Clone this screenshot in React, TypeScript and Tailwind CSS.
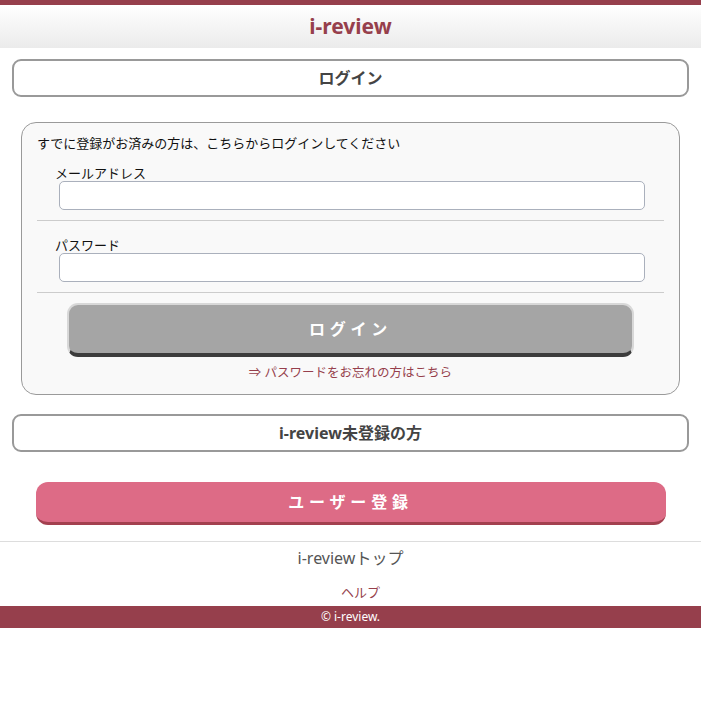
import React from "react";

const font = { fontFamily: '"Noto Sans", "Noto Sans CJK JP", sans-serif' };

function SectionHeader({ children }: { children: React.ReactNode }) {
  return (
    <div className="mx-[12px] h-[38px] rounded-[9px] border-2 border-[#999999] bg-white flex items-center justify-center text-[16px] font-bold text-[#444444]">
      {children}
    </div>
  );
}

export default function App() {
  return (
    <div className="w-[701px] bg-white text-[#222]" style={font}>
      <div className="h-[5px] bg-[#963f4c]" />
      <div className="h-[43px] flex items-center justify-center bg-gradient-to-b from-[#ffffff] to-[#ebebeb]">
        <span className="text-[21px] font-bold text-[#963f4c] leading-none">i-review</span>
      </div>

      <div className="pt-[11px]">
        <SectionHeader>ログイン</SectionHeader>
      </div>

      <div className="mx-[21px] mt-[25px] rounded-[15px] border border-[#9a9a9a] bg-[#f9f9f9] px-[15px] pt-[10px] pb-[11px]">
        <p className="text-[13px] leading-[20px] text-[#111]">すでに登録がお済みの方は、こちらからログインしてください</p>

        <div className="pt-[13px] pb-[10px] border-b border-[#cccccc]">
          <div className="pl-[18px] text-[13px] leading-[15px] text-[#111]">メールアドレス</div>
          <input className="block ml-[22px] mr-[22px] w-[586px] h-[29px] rounded-[5px] border border-[#aab0bc] bg-white" />
        </div>

        <div className="pt-[17px] pb-[10px] border-b border-[#cccccc]">
          <div className="pl-[18px] text-[13px] leading-[15px] text-[#111]">パスワード</div>
          <input type="password" className="block ml-[22px] mr-[22px] w-[586px] h-[29px] rounded-[5px] border border-[#aab0bc] bg-white" />
        </div>

        <div className="pt-[10px] flex justify-center">
          <button className="w-[567px] h-[54px] rounded-[11px] bg-[#a5a5a5] border-2 border-[#d8d8d8] border-b-[4px] border-b-[#3c3c3c] text-white text-[16px] font-bold tracking-[0.3em]">
            ログイン
          </button>
        </div>
        <div className="mt-[6px] text-center text-[12.5px] leading-[20px] text-[#963f4c]">⇒ パスワードをお忘れの方はこちら</div>
      </div>

      <div className="pt-[19px]">
        <SectionHeader>i-review未登録の方</SectionHeader>
      </div>

      <div className="pt-[30px] flex justify-center">
        <button className="w-[630px] h-[43px] rounded-[12px] bg-[#dd6b86] border-b-[3px] border-b-[#a3404f] text-white text-[16px] font-bold tracking-[0.3em]">
          ユーザー登録
        </button>
      </div>

      <div className="mt-[16px] border-t border-[#dddddd] pt-[5px] text-center text-[16px] leading-[22px] text-[#555555]">
        i-reviewトップ
      </div>
      <div className="mt-[13px] pl-[20px] text-center text-[13px] leading-[20px] text-[#963f4c]">ヘルプ</div>
      <div className="mt-[4px] h-[22px] bg-[#963f4c] flex items-center justify-center text-white text-[12px]">© i-review.</div>
    </div>
  );
}
